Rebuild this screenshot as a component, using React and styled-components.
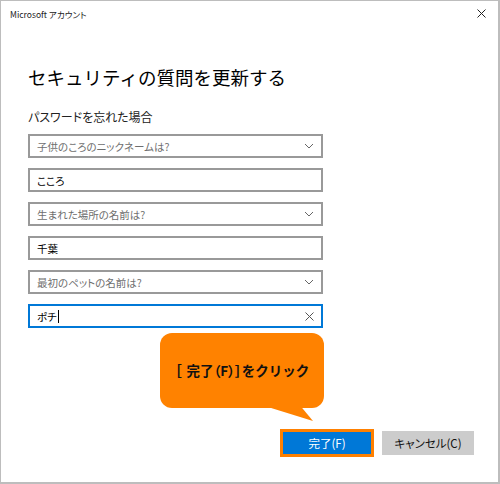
import React from "react";
import styled, { createGlobalStyle } from "styled-components";

const Global = createGlobalStyle`
  html, body { margin: 0; padding: 0; background: #fff; }
  body {
    font-family: "Noto Sans CJK JP", "Noto Sans", sans-serif;
    font-feature-settings: "palt";
    color: #000;
  }
  * { box-sizing: border-box; }
`;

const Window = styled.div`
  position: relative;
  width: 500px;
  height: 484px;
  border: 1px solid #bdbdbd;
  border-right-width: 2px;
  border-bottom-width: 2px;
  background: #fff;
  display: flex;
  flex-direction: column;
`;

const TitleBar = styled.div`
  height: 25px;
  display: flex;
  align-items: center;
  justify-content: space-between;
  padding: 0 12px 0 9px;
  font-size: 8.5px;
  color: #222;
`;

const CloseIcon = styled.svg`
  width: 9px;
  height: 9px;
  display: block;
`;

const Body = styled.div`
  padding: 0 0 0 27px;
  display: flex;
  flex-direction: column;
`;

const Heading = styled.h1`
  margin: 39px 0 0 0;
  font-size: 18.5px;
  font-weight: 400;
  line-height: 24px;
  font-feature-settings: normal;
  color: #000;
`;

const Label = styled.div`
  margin-top: 20px;
  font-size: 12px;
  line-height: 16px;
  color: #222;
`;

const Fields = styled.div`
  margin-top: 9px;
  width: 295px;
  display: flex;
  flex-direction: column;
  gap: 10px;
`;

const Field = styled.div`
  height: 24px;
  border: 2px solid ${(p) => (p.$focused ? "#0078d7" : "#999999")};
  display: flex;
  align-items: center;
  justify-content: space-between;
  padding: 0 7px 0 7px;
  font-size: 10.5px;
  color: ${(p) => (p.$placeholder ? "#6e6e6e" : "#000")};
`;

const Value = styled.span`
  display: flex;
  align-items: center;
`;

const Caret = styled.span`
  display: inline-block;
  width: 1px;
  height: 13px;
  background: #000;
  margin-left: 1px;
`;

const Chevron = styled.svg`
  width: 10px;
  height: 6px;
  display: block;
`;

const ClearIcon = styled.svg`
  width: 9px;
  height: 9px;
  display: block;
`;

const Footer = styled.div`
  margin-top: auto;
  margin-bottom: 25px;
  padding-right: 24px;
  display: flex;
  justify-content: flex-end;
  align-items: center;
  gap: 8px;
`;

const Highlight = styled.div`
  border: 3px solid #ff8000;
  display: flex;
`;

const Button = styled.button`
  width: ${(p) => p.$w}px;
  height: ${(p) => p.$h}px;
  border: none;
  margin: 0;
  padding: 0;
  font-family: inherit;
  font-feature-settings: "palt";
  font-size: 11.5px;
  background: ${(p) => (p.$primary ? "#0078d7" : "#cccccc")};
  color: ${(p) => (p.$primary ? "#fff" : "#111")};
  display: flex;
  align-items: center;
  justify-content: center;
`;

const Callout = styled.div`
  position: absolute;
  left: 159px;
  top: 332px;
  width: 164px;
  height: 75px;
  border-radius: 12px;
  background: #ff8200;
  display: flex;
  align-items: center;
  justify-content: center;
  font-size: 13.5px;
  font-weight: 700;
  font-feature-settings: normal;
  color: #111;
  padding-bottom: 2px;
`;

const Tail = styled.svg`
  position: absolute;
  left: 0;
  top: 0;
  overflow: visible;
`;

const Text = styled.span`
  position: relative;
  display: flex;
  align-items: center;
  white-space: nowrap;
`;

const Tight = styled.span`
  font-feature-settings: "palt";
  margin-right: ${(p) => p.$gap || 0}px;
`;

function ChevronDown() {
  return (
    <Chevron viewBox="0 0 10 6">
      <polyline points="1,1 5,5 9,1" fill="none" stroke="#666" strokeWidth="1" />
    </Chevron>
  );
}

export default function App() {
  return (
    <>
      <Global />
      <Window>
        <TitleBar>
          <span>Microsoft アカウント</span>
          <CloseIcon viewBox="0 0 9 9">
            <path d="M0.5 0.5 L8.5 8.5 M8.5 0.5 L0.5 8.5" stroke="#222" strokeWidth="1" />
          </CloseIcon>
        </TitleBar>
        <Body>
          <Heading>セキュリティの質問を更新する</Heading>
          <Label>パスワードを忘れた場合</Label>
          <Fields>
            <Field $placeholder>
              <span>子供のころのニックネームは?</span>
              <ChevronDown />
            </Field>
            <Field>
              <span>こころ</span>
            </Field>
            <Field $placeholder>
              <span>生まれた場所の名前は?</span>
              <ChevronDown />
            </Field>
            <Field>
              <span>千葉</span>
            </Field>
            <Field $placeholder>
              <span>最初のペットの名前は?</span>
              <ChevronDown />
            </Field>
            <Field $focused>
              <Value>
                ポチ
                <Caret />
              </Value>
              <ClearIcon viewBox="0 0 9 9">
                <path d="M0.5 0.5 L8.5 8.5 M8.5 0.5 L0.5 8.5" stroke="#555" strokeWidth="1" />
              </ClearIcon>
            </Field>
          </Fields>
        </Body>
        <Footer>
          <Highlight>
            <Button $primary $w={88} $h={22}>完了(F)</Button>
          </Highlight>
          <Button $w={92} $h={24}>キャンセル(C)</Button>
        </Footer>
        <Callout>
          <Tail width="164" height="75">
            <polygon points="95,70 138,70 153,88" fill="#ff8200" />
          </Tail>
          <Text>
            <Tight $gap={5}>［</Tight>
            完了
            <Tight>（F）］</Tight>
            をクリック
          </Text>
        </Callout>
      </Window>
    </>
  );
}
